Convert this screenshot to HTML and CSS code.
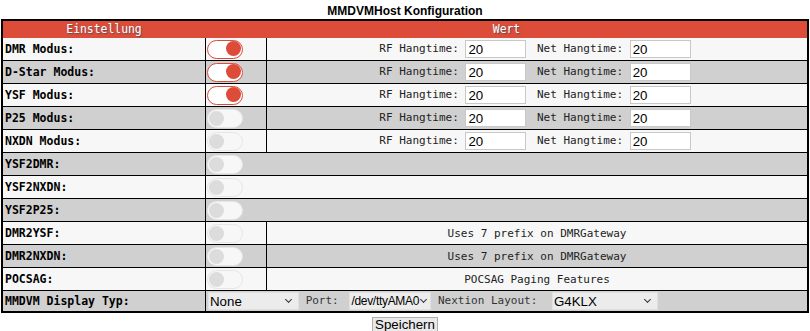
FILE: index.html
```html
<!DOCTYPE html>
<html>

<head>
  <title>MMDVMHost Konfiguration</title>
  <link rel="stylesheet" href="styles.css">
</head>

<body>
  <form class="config-form">
    <div class="page-title">MMDVMHost Konfiguration</div>
    <table class="config-table">
      <thead>
        <tr>
          <th class="col-setting">Einstellung</th>
          <th colspan="2">Wert</th>
        </tr>
      </thead>
      <tbody>
        <tr>
          <td class="label">DMR Modus:</td>
          <td class="switch-cell"><span class="switch on"></span></td>
          <td class="value">RF Hangtime: <input type="text" value="20"> Net Hangtime: <input type="text" value="20"></td>
        </tr>
        <tr>
          <td class="label">D-Star Modus:</td>
          <td class="switch-cell"><span class="switch on"></span></td>
          <td class="value">RF Hangtime: <input type="text" value="20"> Net Hangtime: <input type="text" value="20"></td>
        </tr>
        <tr>
          <td class="label">YSF Modus:</td>
          <td class="switch-cell"><span class="switch on"></span></td>
          <td class="value">RF Hangtime: <input type="text" value="20"> Net Hangtime: <input type="text" value="20"></td>
        </tr>
        <tr>
          <td class="label">P25 Modus:</td>
          <td class="switch-cell"><span class="switch"></span></td>
          <td class="value">RF Hangtime: <input type="text" value="20"> Net Hangtime: <input type="text" value="20"></td>
        </tr>
        <tr>
          <td class="label">NXDN Modus:</td>
          <td class="switch-cell"><span class="switch"></span></td>
          <td class="value">RF Hangtime: <input type="text" value="20"> Net Hangtime: <input type="text" value="20"></td>
        </tr>
        <tr>
          <td class="label">YSF2DMR:</td>
          <td class="switch-cell" colspan="2"><span class="switch"></span></td>
        </tr>
        <tr>
          <td class="label">YSF2NXDN:</td>
          <td class="switch-cell" colspan="2"><span class="switch"></span></td>
        </tr>
        <tr>
          <td class="label">YSF2P25:</td>
          <td class="switch-cell" colspan="2"><span class="switch"></span></td>
        </tr>
        <tr>
          <td class="label">DMR2YSF:</td>
          <td class="switch-cell"><span class="switch"></span></td>
          <td class="value">Uses 7 prefix on DMRGateway</td>
        </tr>
        <tr>
          <td class="label">DMR2NXDN:</td>
          <td class="switch-cell"><span class="switch"></span></td>
          <td class="value">Uses 7 prefix on DMRGateway</td>
        </tr>
        <tr>
          <td class="label">POCSAG:</td>
          <td class="switch-cell"><span class="switch"></span></td>
          <td class="value">POCSAG Paging Features</td>
        </tr>
        <tr class="last-row">
          <td class="label">MMDVM Display Typ:</td>
          <td class="display-cell" colspan="2">
            <span class="select-wrap sel-type"><select><option>None</option></select></span>
            <span class="sel-label">Port:</span>
            <span class="select-wrap sel-port"><select><option>/dev/ttyAMA0</option></select></span>
            <span class="sel-label wide">Nextion Layout:</span>
            <span class="select-wrap sel-layout"><select><option>G4KLX</option></select></span>
          </td>
        </tr>
      </tbody>
    </table>
    <div class="button-row">
      <button type="button" class="save-button">Speichern</button>
    </div>
  </form>
</body>

</html>
```

FILE: styles.css
```css
body {
  margin: 0;
  padding: 0;
  background-color: #fff;
  font-family: "Liberation Sans", Arial, sans-serif;
}

/* title above the table */
.page-title {
  height: 19px;
  line-height: 22px;
  text-align: center;
  font-size: 12px;
  font-weight: bold;
  color: #000;
}

/* config table */
.config-table {
  width: 808px;
  margin: 0 auto;
  border-collapse: collapse;
  border: 2px solid #000;
  font-family: "DejaVu Sans Mono", monospace;
  font-size: 11px;
}

.config-table th {
  height: 16px;
  padding: 0;
  background-color: #dd4b39;
  color: #fff;
  font-weight: normal;
  font-size: 11.4px;
  text-shadow: 1px 1px 1px #555;
  border: 1px solid #dd4b39;
  border-left: 1px solid #f3b3ab;
}

.config-table th.col-setting {
  width: 202px;
}

.config-table td {
  height: 22px;
  padding: 0 2px;
  border: 1px solid #000;
  color: #222;
}

.config-table tbody tr:nth-child(odd) td {
  background-color: #f7f7f7;
}

.config-table tbody tr:nth-child(even) td {
  background-color: #d0d0d0;
}

.config-table td.label {
  font-weight: bold;
  font-size: 11.5px;
  color: #000;
}

.config-table td.switch-cell {
  width: 58px;
  padding: 0 1px;
}

.config-table td.value {
  text-align: center;
}

.config-table tr.last-row td {
  height: 20px;
}

.value input {
  width: 55px;
  height: 14px;
  padding: 1px 2px;
  margin: 0 4px 0 0;
  border: 1px solid #c8c8c8;
  font-family: "Liberation Sans", Arial, sans-serif;
  font-size: 13.3px;
  vertical-align: middle;
}

/* toggle switches */
.switch {
  position: relative;
  display: inline-block;
  vertical-align: middle;
  width: 34px;
  height: 17px;
  border: 1px solid #e6e6e6;
  border-radius: 10px;
  background-color: #f7f7f7;
}

.switch::after {
  content: "";
  position: absolute;
  top: 1px;
  left: 1px;
  width: 15px;
  height: 15px;
  border-radius: 50%;
  background-color: #dcdcdc;
}

.switch.on {
  border: 1.5px solid #dd4b39;
  background-color: #fff;
}

.switch.on::after {
  top: 0.5px;
  left: auto;
  right: 1.5px;
  background-color: #dd4b39;
}

/* display row */
.display-cell {
  padding-left: 1px;
}

.select-wrap {
  position: relative;
  display: inline-block;
  vertical-align: middle;
}

.select-wrap::after {
  content: "";
  position: absolute;
  top: 5px;
  right: 8px;
  width: 4px;
  height: 4px;
  border-right: 1.3px solid #333;
  border-bottom: 1.3px solid #333;
  transform: rotate(45deg);
  pointer-events: none;
}

.select-wrap select {
  -webkit-appearance: none;
  appearance: none;
  width: 100%;
  height: 18px;
  padding: 0 0 0 1px;
  border: 1px solid #e0e0e0;
  border-radius: 0;
  background-color: #ececec;
  font-family: "Liberation Sans", Arial, sans-serif;
  font-size: 13.3px;
  color: #000;
  display: block;
}

.sel-type {
  width: 91px;
}

.sel-port {
  width: 82px;
}

.sel-port select {
  font-size: 12px;
  letter-spacing: -0.3px;
}

.sel-port::after {
  right: 5px;
}

.sel-layout {
  width: 106px;
}

.sel-label {
  margin: 0 4px 0 0;
  color: #333;
}

.sel-label.wide {
  margin-right: 8px;
}

/* save button */
.button-row {
  text-align: center;
  padding-top: 2px;
}

.save-button {
  height: 17px;
  padding: 0 2px;
  border: 1px solid #b0b0b0;
  background-color: #e9e9e9;
  font-family: "Liberation Sans", Arial, sans-serif;
  font-size: 13.3px;
  line-height: 14px;
  color: #000;
}
```
